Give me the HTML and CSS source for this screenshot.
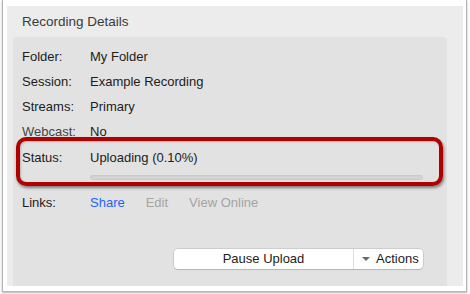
FILE: index.html
```html
<!DOCTYPE html>
<html lang="en">
<head>
    <meta charset="UTF-8">
    <meta name="viewport" content="width=device-width, initial-scale=1.0">
    <title>Recording Details</title>
    <link rel="stylesheet" href="styles.css">
</head>
<body>

<div class="frame">
    <div class="window">
        <h1 class="title">Recording Details</h1>

        <div class="panel">
            <div class="row">
                <span class="label">Folder:</span>
                <span class="value">My Folder</span>
            </div>
            <div class="row">
                <span class="label">Session:</span>
                <span class="value">Example Recording</span>
            </div>
            <div class="row">
                <span class="label">Streams:</span>
                <span class="value">Primary</span>
            </div>
            <div class="row">
                <span class="label muted">Webcast:</span>
                <span class="value">No</span>
            </div>
            <div class="row status-row">
                <span class="label">Status:</span>
                <span class="value">Uploading (0.10%)</span>
            </div>
            <div class="progress">
                <div class="progress-fill" style="width: 0.1%;"></div>
            </div>
            <div class="row links-row">
                <span class="label">Links:</span>
                <span class="links">
                    <a href="#" class="link">Share</a>
                    <span class="link disabled">Edit</span>
                    <span class="link disabled">View Online</span>
                </span>
            </div>

            <div class="actions-bar">
                <div class="segmented">
                    <button class="seg-main">Pause Upload</button>
                    <button class="seg-menu"><span class="caret"></span>Actions</button>
                </div>
            </div>
        </div>
    </div>
</div>

<!-- annotation around the status -->
<div class="highlight"></div>

</body>
</html>
```

FILE: styles.css
```css
* {
    margin: 0;
    padding: 0;
    box-sizing: border-box;
}

html, body {
    height: 100%;
    background: #ffffff;
    font-family: "Liberation Sans", Arial, sans-serif;
    font-size: 13px;
    color: #1c1c1c;
    overflow: hidden;
}

.frame {
    margin-left: 2px;
    width: 465px;
    height: 292px;
    padding: 6px 3px 5px 4px;
    border: 1px solid #b4b4b4;
    border-top: none;
    background: #fff;
    box-shadow: 0 1px 2px rgba(0, 0, 0, 0.3);
}

.window {
    height: 100%;
    background: #ececec;
    display: flex;
    flex-direction: column;
}

.title {
    height: 31px;
    padding: 1px 0 0 15px;
    line-height: 30px;
    font-size: 13.5px;
    font-weight: normal;
    color: #3a3a3a;
}

.panel {
    flex: 1;
    margin: 0 16px 0 6px;
    padding: 6.6px 0 0 9px;
    background: #e2e2e2;
    border-radius: 4px 4px 0 0;
}

.row {
    display: flex;
    height: 25px;
    line-height: 25px;
}

.label {
    width: 68px;
    flex-shrink: 0;
}

.label.muted {
    color: #444;
}

.status-row {
    margin-top: 1px;
}

.progress {
    height: 5px;
    margin: 5px 24px 0 68px;
    background: #d3d3d3;
    border: 1px solid #cacaca;
    border-radius: 3px;
    overflow: hidden;
}

.progress-fill {
    height: 100%;
    background: #c8c8c8;
}

.links-row {
    margin-top: 10px;
}

.links {
    display: flex;
    gap: 21px;
}

.link {
    color: #1f62ff;
    text-decoration: none;
}

.link.disabled {
    color: #a4a4a4;
}

.actions-bar {
    display: flex;
    justify-content: flex-end;
    padding-right: 24px;
    margin-top: 34px;
}

.segmented {
    display: flex;
    height: 20px;
    background: #fff;
    border-radius: 4px;
    box-shadow: 0 0 0 0.5px rgba(0, 0, 0, 0.18), 0 1px 1px rgba(0, 0, 0, 0.12);
}

.segmented button {
    font-family: inherit;
    font-size: 13px;
    color: #1c1c1c;
    background: none;
    border: none;
    line-height: 20px;
    cursor: pointer;
}

.seg-main {
    width: 179px;
    text-align: center;
}

.seg-menu {
    width: 70px;
    border-left: 1px solid #dcdcdc !important;
    display: flex;
    align-items: center;
    padding-left: 8px;
}

.caret {
    width: 0;
    height: 0;
    margin-right: 6px;
    border-left: 4px solid transparent;
    border-right: 4px solid transparent;
    border-top: 4px solid #6a6a6a;
}

.highlight {
    position: absolute;
    left: 16px;
    top: 137px;
    width: 427px;
    height: 49px;
    border: 4px solid #b00000;
    border-radius: 10px;
    box-shadow: 1px 2px 3px rgba(0, 0, 0, 0.45), inset 1px 1px 2px rgba(0, 0, 0, 0.2);
}
```
